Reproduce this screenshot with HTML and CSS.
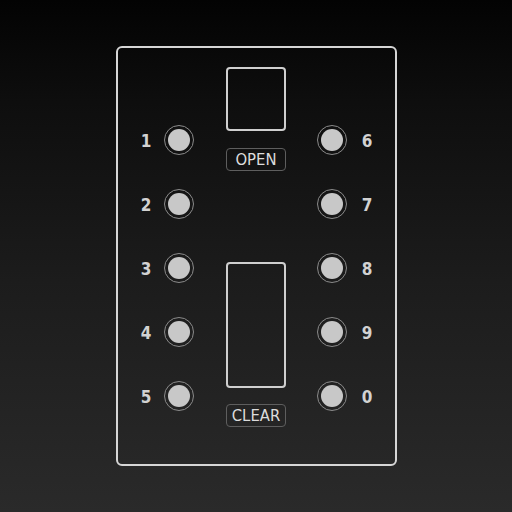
FILE: index.html
```html
<!DOCTYPE html>
<html>
<head>
<meta charset="utf-8">
<link rel="stylesheet" href="styles.css">
</head>
<body>
<div class="stage">
  <div class="panel">
    <div class="col left">
      <div class="row"><span class="num">1</span><span class="btn"><span class="dot"></span></span></div>
      <div class="row"><span class="num">2</span><span class="btn"><span class="dot"></span></span></div>
      <div class="row"><span class="num">3</span><span class="btn"><span class="dot"></span></span></div>
      <div class="row"><span class="num">4</span><span class="btn"><span class="dot"></span></span></div>
      <div class="row"><span class="num">5</span><span class="btn"><span class="dot"></span></span></div>
    </div>
    <div class="col center">
      <div class="window small"></div>
      <div class="label">OPEN</div>
      <div class="window tall"></div>
      <div class="label clear">CLEAR</div>
    </div>
    <div class="col right">
      <div class="row"><span class="btn"><span class="dot"></span></span><span class="num">6</span></div>
      <div class="row"><span class="btn"><span class="dot"></span></span><span class="num">7</span></div>
      <div class="row"><span class="btn"><span class="dot"></span></span><span class="num">8</span></div>
      <div class="row"><span class="btn"><span class="dot"></span></span><span class="num">9</span></div>
      <div class="row"><span class="btn"><span class="dot"></span></span><span class="num">0</span></div>
    </div>
  </div>
</div>
</body>
</html>
```
FILE: styles.css
```css
html, body {
  margin: 0;
  padding: 0;
  width: 512px;
  height: 512px;
}
body {
  background: linear-gradient(to bottom, #030303 0%, #0e0e0e 20%, #1c1c1c 55%, #2a2a2a 100%);
  font-family: "DejaVu Sans Condensed", "DejaVu Sans", sans-serif;
}
.stage {
  padding-top: 46px;
  padding-left: 116px;
}
.panel {
  box-sizing: border-box;
  width: 281px;
  height: 420px;
  border: 2px solid #d6d6d6;
  border-radius: 6px;
  display: flex;
  align-items: flex-start;
  padding-left: 20px;
}
.col {
  display: flex;
  flex-direction: column;
}
.left {
  margin-top: 60px;
}
.right {
  margin-top: 60px;
  margin-left: 31px;
}
.center {
  margin-top: 19px;
  margin-left: 32px;
  width: 60px;
}
.row {
  height: 64px;
  display: flex;
  align-items: center;
}
.left .row { gap: 10px; }
.right .row { gap: 12px; }
.num {
  width: 16px;
  text-align: center;
  color: #d2d2d2;
  font-weight: bold;
  font-size: 17px;
  line-height: 18px;
  padding-top: 1px;
}
.btn {
  box-sizing: border-box;
  width: 30px;
  height: 30px;
  border-radius: 50%;
  border: 1.5px solid #8a8a8a;
  display: flex;
  align-items: center;
  justify-content: center;
}
.dot {
  width: 22px;
  height: 22px;
  border-radius: 50%;
  background: #c8c8c8;
}
.window {
  box-sizing: border-box;
  width: 60px;
  border: 2px solid #cfcfcf;
  border-radius: 4px;
}
.small { height: 64px; }
.tall { height: 126px; margin-top: 91px; }
.label {
  box-sizing: border-box;
  width: 60px;
  height: 23px;
  margin-top: 17px;
  border: 1px solid #5e5e5e;
  border-radius: 4px;
  color: #dcdcdc;
  font-size: 16.5px;
  line-height: 21px;
  text-align: center;
}
.clear { margin-top: 16px; }
```
